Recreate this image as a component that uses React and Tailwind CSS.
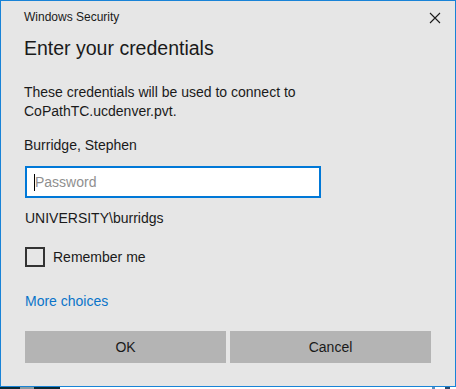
export default function App() {
  return (
    <div className="w-[456px] h-[389px] bg-white flex flex-col font-['Segoe_UI','Liberation_Sans',Arial,sans-serif] text-[#1a1a1a]">
      <div className="h-[387px] border border-[#1883d7] bg-[#e6e6e6] flex flex-col">
        {/* title bar */}
        <div className="flex items-center justify-between h-[32px] pl-[23px] pr-[14px]">
          <span className="text-[12px] leading-none">Windows Security</span>
          <svg width="12" height="12" viewBox="0 0 12 12" className="mt-[1px]">
            <path d="M1 1 L11 11 M11 1 L1 11" stroke="#1a1a1a" strokeWidth="1.1" />
          </svg>
        </div>

        <div className="flex flex-col px-[24px]">
          <h1 className="text-[19.5px] leading-[26px] mt-[2px] -ml-[1px] font-normal">Enter your credentials</h1>

          <p className="text-[14px] leading-[19px] mt-[22px] -ml-[1px]">
            These credentials will be used to connect to
            <br />
            CoPathTC.ucdenver.pvt.
          </p>

          <p className="text-[14px] leading-[19px] mt-[15px] -ml-[1px]">Burridge, Stephen</p>

          <div className="mt-[11px] w-[296px] h-[32px] border-2 border-[#0078d7] bg-white flex items-center pl-[7px]">
            <span className="w-px h-[17px] bg-black"></span>
            <span className="text-[14px] text-[#8f8f8f] leading-none">Password</span>
          </div>

          <p className="text-[14px] leading-[19px] mt-[11px]">UNIVERSITY\burridgs</p>

          <label className="flex items-center gap-[8px] mt-[19px]">
            <span className="w-[20px] h-[20px] border-2 border-[#333333] bg-transparent"></span>
            <span className="text-[14px] leading-none">Remember me</span>
          </label>

          <a className="text-[14px] leading-[19px] text-[#0a74c9] mt-[25px] w-fit">More choices</a>

          <div className="flex gap-[4px] mt-[20px] w-[406px]">
            <button className="flex-1 h-[32px] bg-[#b4b4b4] text-[14px]">OK</button>
            <button className="flex-1 h-[32px] bg-[#b4b4b4] text-[14px]">Cancel</button>
          </div>
        </div>
      </div>

      {/* taskbar peeking under the window */}
      <div className="flex h-[2px]">
        <div className="w-[20px] bg-[#0b2a33]"></div>
        <div className="w-[14px] bg-[#8a9ba0]"></div>
        <div className="w-[26px] bg-[#0b2a33]"></div>
        <div className="flex-1 bg-white"></div>
        <div className="w-[3px] bg-[#5a8fc0] mr-[10px]"></div>
        <div className="w-[5px] bg-[#2b4a6a] mr-[6px]"></div>
      </div>
    </div>
  );
}
